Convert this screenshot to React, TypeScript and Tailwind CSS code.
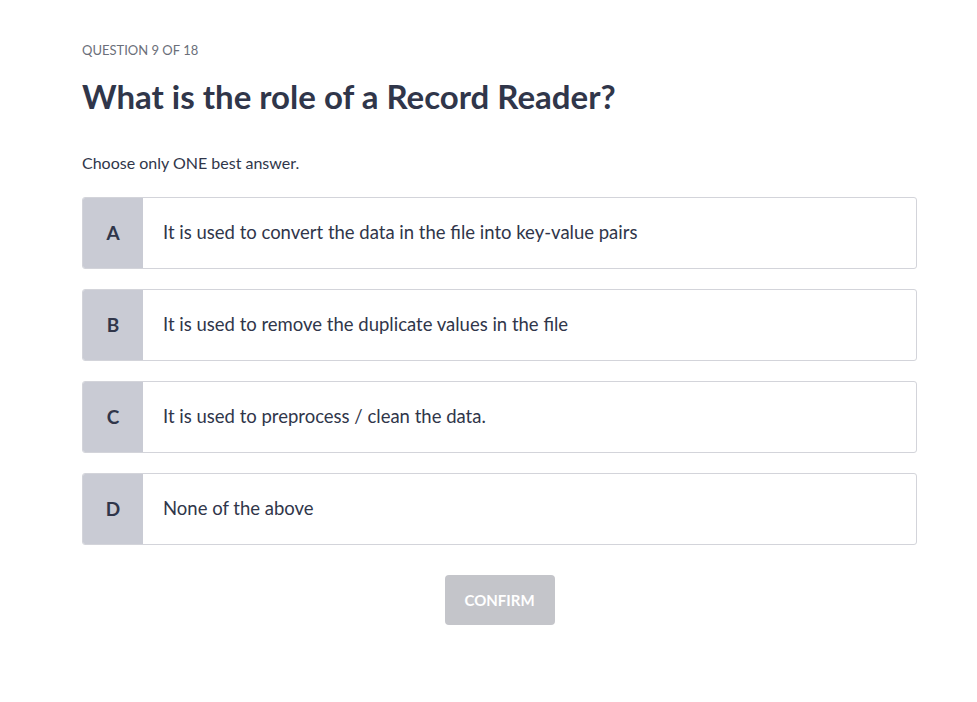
import React from "react";

const options = [
  { k: "A", t: "It is used to convert the data in the file into key-value pairs" },
  { k: "B", t: "It is used to remove the duplicate values in the file" },
  { k: "C", t: "It is used to preprocess / clean the data." },
  { k: "D", t: "None of the above" },
];

export default function App() {
  return (
    <div
      className="min-h-[702px] w-full bg-white"
      style={{ fontFamily: "Lato, 'Noto Sans', sans-serif" }}
    >
      <div className="pl-[82px] pr-[60px] pt-[41px]">
        <div className="text-[13px] leading-[18px] text-[#6b6f7a]">QUESTION 9 OF 18</div>
        <h1 className="mt-[18px] text-[33px] font-bold leading-[38px] text-[#30364a]">
          What is the role of a Record Reader?
        </h1>
        <p className="mt-[38px] text-[16px] leading-[20px] text-[#30364a]">Choose only ONE best answer.</p>
        <div className="mt-[24px] flex flex-col gap-[20px]">
          {options.map((o) => (
            <div
              key={o.k}
              className="flex h-[72px] overflow-hidden rounded-[3px] border border-[#d3d4da] bg-white"
            >
              <div className="flex w-[60px] items-center justify-center bg-[#c9cbd4] text-[19px] font-bold text-[#30364a]">
                {o.k}
              </div>
              <div className="flex items-center pl-[20px] text-[18.5px] text-[#30364a]">{o.t}</div>
            </div>
          ))}
        </div>
        <div className="mt-[30px] flex justify-center">
          <button className="h-[50px] w-[110px] rounded-[4px] bg-[#c4c5ca] text-[15px] font-bold text-white">
            CONFIRM
          </button>
        </div>
      </div>
    </div>
  );
}
